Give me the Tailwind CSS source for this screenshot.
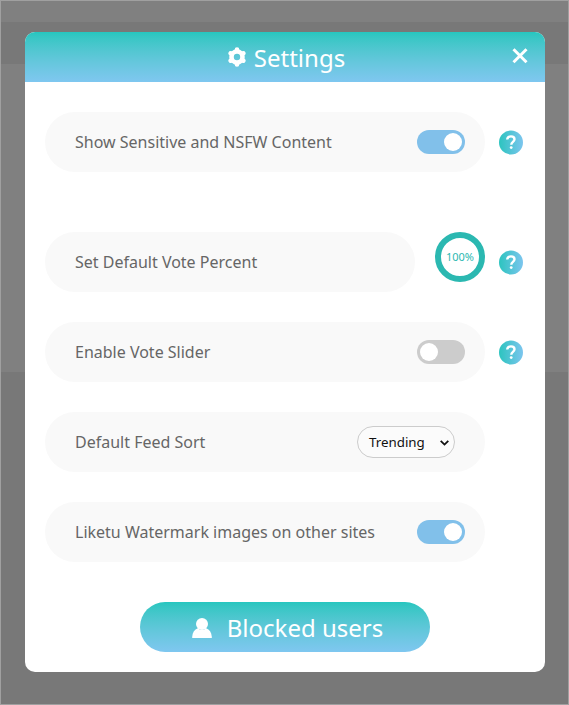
<!DOCTYPE html>
<html lang="en">
  <head>
    <meta charset="utf-8" />
    <meta name="viewport" content="width=device-width, initial-scale=1" />
    <title>Settings</title>
    <script src="https://cdn.jsdelivr.net/npm/@tailwindcss/browser@4"></script>
  </head>
  <body class="h-[705px] w-[569px] overflow-hidden font-['Noto_Sans',sans-serif]">
    <!-- dimmed page behind the modal -->
    <div class="relative flex h-full flex-col border border-[#a0a0a0] bg-[#787878]">
      <div class="h-[21px] bg-[#808080]"></div>
      <div class="h-[42px] bg-[#787878]"></div>
      <div class="h-[308px] bg-[#808080]"></div>

      <div class="absolute left-6 top-[31px] flex h-[640px] w-[520px] flex-col overflow-hidden rounded-[10px] bg-white">
        <header class="relative flex h-[50px] shrink-0 items-center justify-center bg-linear-to-b from-[#26c6bf] to-[#7fc7f0] pl-[2px] pt-[2px] text-white">
          <svg class="mr-[7px] size-5 -translate-y-px" viewBox="0 0 20 20" fill="none" stroke="currentColor">
            <circle cx="10" cy="10" r="5.500" stroke-width="4.600"/>
            <path stroke-width="4.600" stroke-linecap="round" d="M10 3.600V2.600M15.500 6.800l.9-.5M15.500 13.200l.9.5M10 16.400v1M4.500 13.200l-.9.5M4.500 6.800l-.9-.5"/>
          </svg>
          <h1 class="text-2xl">Settings</h1>
          <button class="absolute right-[17px] top-4" aria-label="Close">
            <svg class="size-4" viewBox="0 0 16 16" fill="none" stroke="currentColor" stroke-width="3">
              <path d="M1.500 1.200l13 13M14.500 1.200l-13 13"/>
            </svg>
          </button>
        </header>

        <main class="flex flex-col px-5 pt-[30px] text-base text-[#666]">
          <div class="mb-[60px] flex items-center">
            <div class="flex h-[60px] w-[440px] items-center justify-between rounded-full bg-[#f9f9f9] pl-[30px] pr-5">
              <span>Show Sensitive and NSFW Content</span>
              <div class="flex h-6 w-12 items-center justify-end rounded-full bg-[#81c0ea] px-[3px]"><i class="size-[18px] rounded-full bg-white"></i></div>
            </div>
            <svg class="ml-[14px] mt-px h-[25px] w-6" viewBox="0 0 24 25">
              <defs>
                <linearGradient id="help"><stop stop-color="#2cc4bf"/><stop offset="1" stop-color="#7cc5ee"/></linearGradient>
              </defs>
              <circle cx="12" cy="12.500" r="12" fill="url(#help)"/>
              <path d="M8.200 9.500C8.400 7.500 9.900 6.400 12 6.400s3.500 1.100 3.500 2.900c0 2.700-3.200 2.500-3.200 5.500" fill="none" stroke="#fff" stroke-width="2.400"/>
              <circle cx="12.200" cy="17.600" r="1.400" fill="#fff"/>
            </svg>
          </div>

          <div class="mb-[30px] flex items-center">
            <div class="flex h-[60px] w-[370px] items-center rounded-full bg-[#f9f9f9] pl-[30px]">
              <span>Set Default Vote Percent</span>
            </div>
            <div class="mb-[10px] ml-5 flex size-[50px] items-center justify-center rounded-full border-6 border-[#2bb8b1] text-[11px] text-[#2bb8b1]">100%</div>
            <svg class="ml-[14px] mt-px h-[25px] w-6" viewBox="0 0 24 25">
              <circle cx="12" cy="12.500" r="12" fill="url(#help)"/>
              <path d="M8.200 9.500C8.400 7.500 9.900 6.400 12 6.400s3.500 1.100 3.500 2.900c0 2.700-3.200 2.500-3.200 5.500" fill="none" stroke="#fff" stroke-width="2.400"/>
              <circle cx="12.200" cy="17.600" r="1.400" fill="#fff"/>
            </svg>
          </div>

          <div class="mb-[30px] flex items-center">
            <div class="flex h-[60px] w-[440px] items-center justify-between rounded-full bg-[#f9f9f9] pl-[30px] pr-5">
              <span>Enable Vote Slider</span>
              <div class="flex h-6 w-12 items-center rounded-full bg-[#ccc] px-[3px]"><i class="size-[18px] rounded-full bg-white"></i></div>
            </div>
            <svg class="ml-[14px] mt-px h-[25px] w-6" viewBox="0 0 24 25">
              <circle cx="12" cy="12.500" r="12" fill="url(#help)"/>
              <path d="M8.200 9.500C8.400 7.500 9.900 6.400 12 6.400s3.500 1.100 3.500 2.900c0 2.700-3.200 2.500-3.200 5.500" fill="none" stroke="#fff" stroke-width="2.400"/>
              <circle cx="12.200" cy="17.600" r="1.400" fill="#fff"/>
            </svg>
          </div>

          <div class="mb-[30px] flex h-[60px] w-[440px] items-center justify-between rounded-full bg-[#f9f9f9] px-[30px]">
            <span>Default Feed Sort</span>
            <button class="flex h-8 w-[98px] items-center justify-between rounded-full border border-[#ccc] bg-[#fbfbfb] pl-[11px] pr-[5px] pt-px text-[13.333px] text-[#111]">
              Trending
              <svg class="h-[6px] w-[9px]" viewBox="0 0 9 6" fill="none" stroke="currentColor" stroke-width="1.800"><path d="M.7 .8l3.800 3.800L8.300 .8"/></svg>
            </button>
          </div>

          <div class="mb-10 flex h-[60px] w-[440px] items-center justify-between rounded-full bg-[#f9f9f9] pl-[30px] pr-5">
            <span>Liketu Watermark images on other sites</span>
            <div class="flex h-6 w-12 items-center justify-end rounded-full bg-[#81c0ea] px-[3px]"><i class="size-[18px] rounded-full bg-white"></i></div>
          </div>

          <button class="ml-[95px] flex h-[50px] w-[290px] items-center justify-center rounded-full bg-linear-to-b from-[#26c6bf] to-[#7fc7f0] pl-[5px] pt-[2px] text-2xl text-white">
            <svg class="mr-[15px] h-5 w-5" viewBox="0 0 20 20" fill="currentColor">
              <circle cx="10" cy="6" r="6"/>
              <path d="M5.800 10.300C2.500 11.500.5 14.500.2 18.700V20h19.600v-1.300c-.3-4.200-2.300-7.200-5.600-8.400-2.300 2.200-6.100 2.200-8.400 0z"/>
            </svg>
            Blocked users
          </button>
        </main>
      </div>
    </div>
  </body>
</html>
